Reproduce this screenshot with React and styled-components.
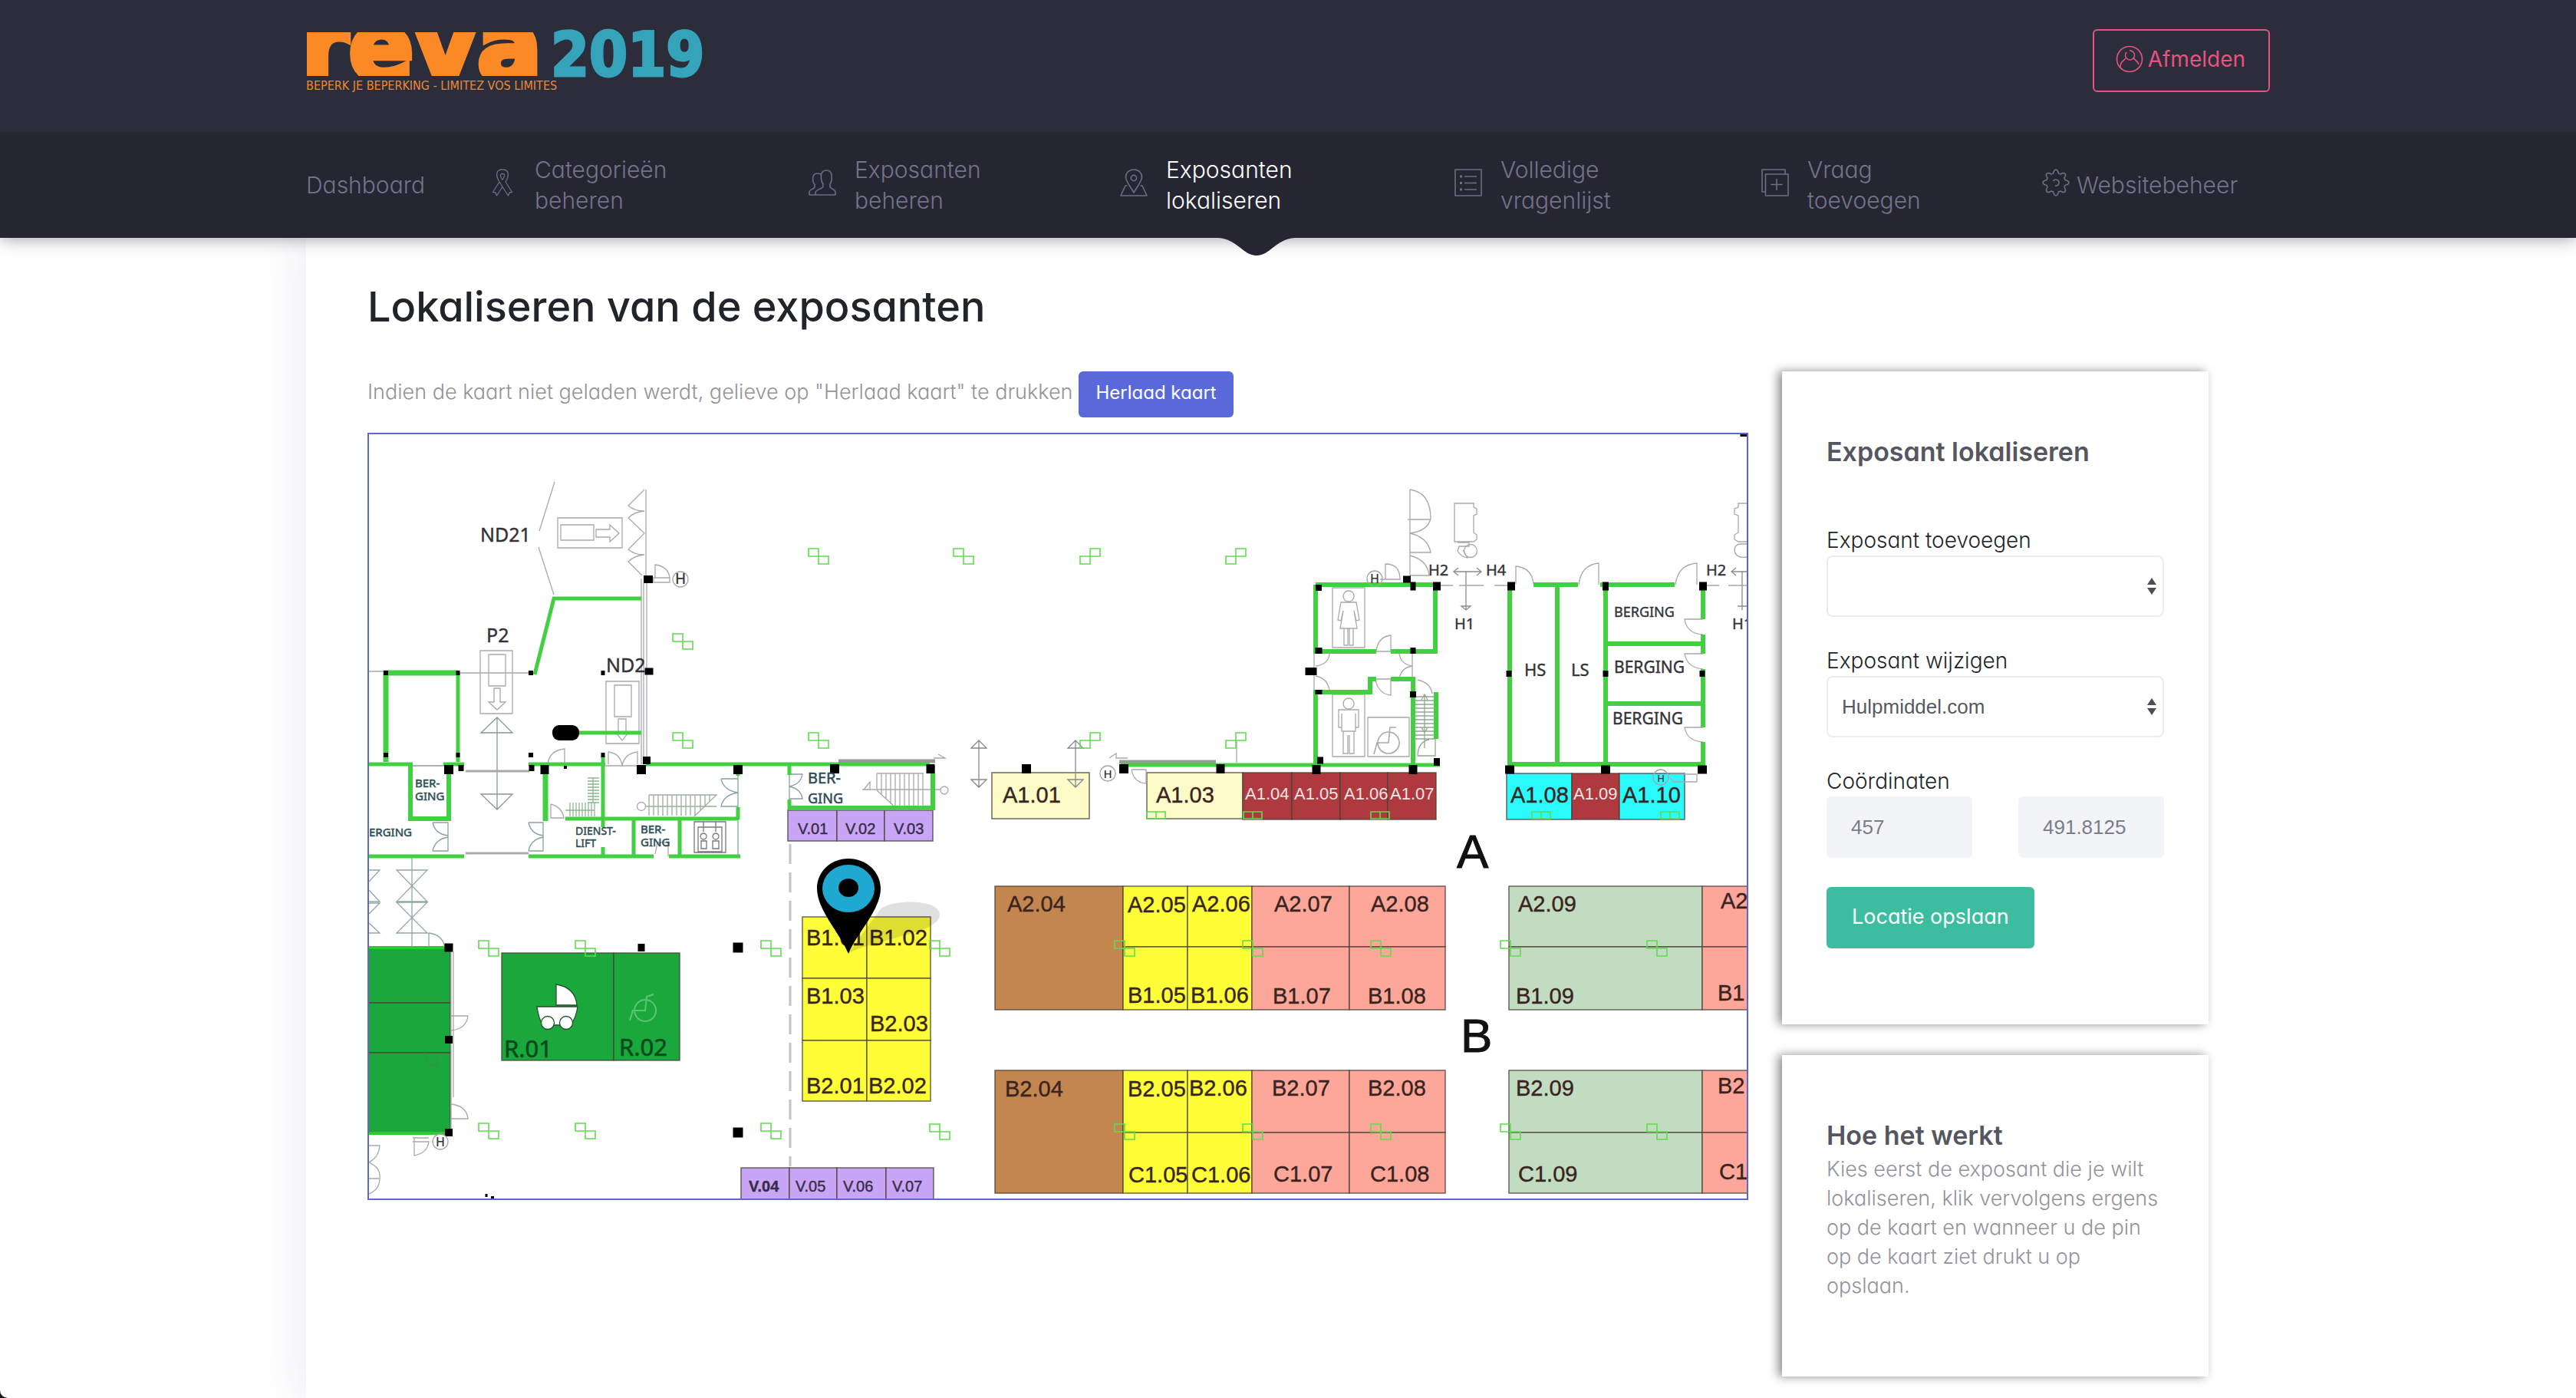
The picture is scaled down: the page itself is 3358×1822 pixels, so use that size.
import React from 'react';
import styled, { createGlobalStyle, css } from 'styled-components';

const GlobalStyle = createGlobalStyle`
  *, *::before, *::after { box-sizing: border-box; }
  html { background: #17171c; }
  body {
    margin: 0;
    color: #212529;
    font-family: Inter, Roboto, sans-serif;
    font-feature-settings: 'cv11' 1;
    font-size: 27px;
  }
  h1, h2, p { margin: 0; }
`;

const Page = styled.div`
  min-height: 100vh;
  display: flex;
  flex-direction: column;
  background: #fff;
  border-bottom-left-radius: 10px;
  overflow: hidden;
`;

const Container = styled.div`
  width: 100%;
  max-width: 2560px;
  margin: 0 auto;
`;

/* ---------- header ---------- */

const TopBar = styled.header`
  background: #2c2d3a;
  position: relative;
  z-index: 3;
`;

const TopBarInner = styled(Container)`
  display: flex;
  justify-content: space-between;
  align-items: flex-start;
  padding: 38px 0 52px;
`;

const LogoLink = styled.a`
  display: block;
  text-decoration: none;
  svg { display: block; overflow: visible; }
`;

const LogoutButton = styled.button`
  display: flex;
  align-items: center;
  gap: 6px;
  height: 82px;
  padding: 0 30px 4px 28px;
  border: 2px solid #e6537f;
  border-radius: 6px;
  background: transparent;
  color: #e6537f;
  font: inherit;
  font-size: 28px;
  cursor: pointer;
`;

const NavBar = styled.nav`
  background: #262632;
  position: relative;
  z-index: 2;
  box-shadow: 0 2px 20px rgba(30, 28, 50, 0.4);
`;

const NavList = styled.ul`
  display: grid;
  grid-template-columns: 238fr 417fr 406fr 436fr 400fr 366fr 297fr;
  list-style: none;
  width: 100%;
  max-width: 2560px;
  margin: 0 auto;
  padding: 0;
`;

const NavItem = styled.li`
  position: relative;
  display: flex;
`;

const NavLink = styled.a`
  display: flex;
  align-items: center;
  gap: ${(p) => (p.$tight ? 9 : 24)}px;
  height: 138px;
  color: ${(p) => (p.$active ? '#fff' : '#73738a')};
  font-size: 30px;
  font-weight: 300;
  line-height: 40px;
  text-decoration: none;
  svg { flex: none; color: #6d6d83; margin-bottom: 6px; }
`;

const NavText = styled.span`
  display: flex;
  flex-direction: column;
`;

const NavArrow = styled.svg`
  position: absolute;
  top: 100%;
  left: 128px;
  margin-top: -1px;
`;

/* ---------- content ---------- */

const Main = styled.main`
  flex: 1;
  margin-left: max(0px, calc(50% - 1280px));
  background: #fff;
  box-shadow: -10px 0 50px rgba(70, 60, 130, 0.09);
`;

const Content = styled.div`
  max-width: 2560px;
  padding: 60px 80px 28px;
`;

const PageTitle = styled.h1`
  font-size: 54px;
  line-height: 60px;
  font-weight: 500;
`;

const Columns = styled.div`
  display: grid;
  grid-template-columns: minmax(0, 1fr) 556px;
  gap: 44px;
  align-items: start;
  padding-top: 54px;
`;

const Sidebar = styled.aside`
  display: flex;
  flex-direction: column;
  gap: 40px;
`;

const MapColumn = styled.section`
  display: flex;
  flex-direction: column;
  gap: 20px;
`;

const Hint = styled.div`
  display: flex;
  align-items: center;
  gap: 8px;
`;

const mutedText = css`
  color: #93939b;
  font-size: 27px;
  font-weight: 300;
  line-height: 38px;
`;

const HintText = styled.p`
  ${mutedText}
  padding-bottom: 6px;
`;

const SolidButton = styled.button`
  border: 0;
  border-radius: 6px;
  color: #fff;
  background: ${(p) => p.$color};
  font: inherit;
  font-size: ${(p) => (p.$small ? 24 : 27)}px;
  height: ${(p) => (p.$small ? 60 : 80)}px;
  padding: ${(p) => (p.$small ? '0 22px 6px' : '0 33px 4px')};
  white-space: nowrap;
  cursor: pointer;
`;

const MapFrame = styled.div`
  border: 2px solid #5e67cf;
  svg { display: block; width: 100%; height: auto; }
`;

const Card = styled.section`
  background: #fff;
  padding: 80px 58px 99px;
  box-shadow: -5px 0 12px rgba(0, 0, 0, 0.45);
`;

const CardTitle = styled.h2`
  color: #55565f;
  font-size: 34px;
  line-height: 50px;
  font-weight: 600;
`;

const CardText = styled.p`
  ${mutedText}
`;

const Form = styled.form`
  display: flex;
  flex-direction: column;
  align-items: flex-start;
  gap: 38px;
  padding-top: 71px;
`;

const Field = styled.div`
  width: 100%;
`;

const Label = styled.label`
  display: block;
  font-size: 28px;
  font-weight: 300;
  line-height: 39px;
`;

const SelectBox = styled.div`
  position: relative;
  svg {
    position: absolute;
    right: 10px;
    top: 28px;
    pointer-events: none;
  }
`;

const Select = styled.select`
  display: block;
  appearance: none;
  width: 100%;
  height: 80px;
  padding: 0 40px 0 18px;
  border: 2px solid #ebecef;
  border-radius: 8px;
  background: #fff;
  color: #575962;
  font-family: 'Liberation Sans', Arial, sans-serif;
  font-size: 26px;
`;

const InputRow = styled.div`
  display: grid;
  grid-template-columns: 1fr 1fr;
  gap: 60px;
`;

const Input = styled.input`
  width: 100%;
  height: 80px;
  padding: 0 32px;
  border: 0;
  border-radius: 6px;
  background: #f3f4f8;
  color: #7b7c87;
  font-family: 'Liberation Sans', Arial, sans-serif;
  font-size: 26px;
`;

/* ---------- icons ---------- */

const Icon = ({ children, size = 36 }) => (
  <svg width={size} height={size} viewBox="0 0 36 36" fill="none" stroke="currentColor" strokeWidth="1.6" strokeLinejoin="round" aria-hidden="true">
    {children}
  </svg>
);

const RibbonIcon = () => (
  <Icon>
    <path d="M18 1 C9 1 9 9 14 17 L5.500 30.500 L9 31 L10.500 35 L18 23.500 L25.500 35 L27 31 L30.500 30.500 L22 17 C27 9 27 1 18 1 Z" strokeWidth="1.300" />
    <path d="M18 6.500 C14 6.500 15 10 18 14.500 C21 10 22 6.500 18 6.500 Z M14 17 L18 23.500" strokeWidth="1.300" />
  </Icon>
);
const UsersIcon = () => (
  <Icon>
    <path d="M9 34 H35 V30 C35 27 28 26 28 23 V20 C30 17 30.500 12 30 8 C29.500 4 27 2 23.500 2 C20 2 17 4 16.500 8 C16 12 17 17 19 20 V23 C19 26 9 27 9 31 Z" />
    <path d="M9 34 H1 V30 C1 27 8 26 8 24 V21 C6 18 5 14 6 10 C7 6 11 5 16.500 7" />
  </Icon>
);
const PinIcon = () => (
  <Icon>
    <path d="M18 31 C14 24 7.500 16 7.500 11 C7.500 5 12 1 18 1 C24 1 28.500 5 28.500 11 C28.500 16 22 24 18 31 Z" />
    <circle cx="18" cy="12" r="3.600" />
    <path d="M9.500 22 H7 L1 35 H35 L29 22 H26.500" />
  </Icon>
);
const ListIcon = () => (
  <Icon>
    <path d="M1 1 H35 V35 H1 Z M13 10 H29 M13 18.500 H29 M13 27 H29" />
    <path d="M7 10 H10 M7 18.500 H10 M7 27 H10" strokeWidth="3" />
  </Icon>
);
const AddIcon = () => (
  <Icon>
    <path d="M5.500 7 H35 V35 H5.500 Z M5.500 30 H1 V1 H31 V7 M20 13 V28 M12.500 20.500 H27.500" />
  </Icon>
);
const GearIcon = () => (
  <Icon>
    <path d="M15.500 3 Q18 -1 20.500 3 L21.500 6 L24 7 L27 5.500 Q31 5 30.500 9 L29 12 L30 14.500 L33 15.500 Q37 18 33 20.500 L30 21.500 L29 24 L30.500 27 Q31 31 27 30.500 L24 29 L21.500 30 L20.500 33 Q18 37 15.500 33 L14.500 30 L12 29 L9 30.500 Q5 31 5.500 27 L7 24 L6 21.500 L3 20.500 Q-1 18 3 15.500 L6 14.500 L7 12 L5.500 9 Q5 5 9 5.500 L12 7 L14.500 6 Z" />
    <path d="M14.500 16 A4 4 0 1 1 17 22" />
  </Icon>
);
const AccountIcon = () => (
  <Icon>
    <circle cx="18" cy="18" r="16.500" />
    <path d="M14 9 A6 6 0 1 0 18 7" />
    <path d="M6 29 C6 22 9 21 13 17 M23 17 C27 20 29 22 30 25" />
  </Icon>
);
const SortArrows = () => (
  <svg width="12" height="24" viewBox="0 0 12 24" fill="#4c4d56" aria-hidden="true">
    <path d="M0 10 L6 1 L12 10 Z M0 14 L6 23 L12 14 Z" />
  </svg>
);

const Logo = () => (
  <svg width="520" height="82" viewBox="0 0 520 82" role="img" aria-label="reva 2019">
    <clipPath id="logo-band"><path d="M1 4 H318 L322 61 H1 Z" /></clipPath>
    <g fontFamily="'DejaVu Sans', sans-serif" fontWeight="700">
      <text x="-7" y="66" fontSize="126" fill="#fb8a26" stroke="#fb8a26" strokeWidth="7" clipPath="url(#logo-band)">reva</text>
      <text x="319" y="61" fontSize="80" fill="#35a4ba" stroke="#35a4ba" strokeWidth="3" fontFamily="'DejaVu Sans Condensed', 'DejaVu Sans', sans-serif">2019</text>
    </g>
    <text x="0" y="79" fontSize="16" fill="#e8893a" fontFamily="'Liberation Sans Narrow', 'DejaVu Sans Condensed', sans-serif">BEPERK JE BEPERKING - LIMITEZ VOS LIMITES</text>
  </svg>
);

/* ---------- floor plan ---------- */

const STAND = { brown: '#c3864f', yellow: '#fdfd38', salmon: '#fca799', mint: '#c1dcc1', cream: '#fdfcc9', red: '#ae393f', cyan: '#2bfafc', violet: '#c8a6f5', green: '#1aa83c' };

// [x, y, width, height, colour]
const stands = [
  [1298, 1155, 167, 161, 'brown'], [1465, 1155, 84, 79, 'yellow'], [1549, 1155, 84, 79, 'yellow'], [1465, 1234, 84, 82, 'yellow'], [1549, 1234, 84, 82, 'yellow'],
  [1633, 1155, 127, 79, 'salmon'], [1760, 1155, 125, 79, 'salmon'], [1633, 1234, 127, 82, 'salmon'], [1760, 1234, 125, 82, 'salmon'],
  [1298, 1395, 167, 160, 'brown'], [1465, 1395, 84, 81, 'yellow'], [1549, 1395, 84, 81, 'yellow'], [1465, 1476, 84, 79, 'yellow'], [1549, 1476, 84, 79, 'yellow'],
  [1633, 1395, 127, 81, 'salmon'], [1760, 1395, 125, 81, 'salmon'], [1633, 1476, 127, 79, 'salmon'], [1760, 1476, 125, 79, 'salmon'],
  [1968, 1155, 252, 79, 'mint'], [1968, 1234, 252, 82, 'mint'], [2220, 1155, 90, 79, 'salmon'], [2220, 1234, 90, 82, 'salmon'],
  [1968, 1395, 252, 81, 'mint'], [1968, 1476, 252, 79, 'mint'], [2220, 1395, 90, 81, 'salmon'], [2220, 1476, 90, 79, 'salmon'],
  [1294, 1007, 127, 60, 'cream'], [1496, 1007, 125, 60, 'cream'],
  [1621, 1007, 64, 61, 'red'], [1685, 1007, 63, 61, 'red'], [1748, 1007, 62, 61, 'red'], [1810, 1007, 63, 61, 'red'],
  [1965, 1008, 85, 60, 'cyan'], [2050, 1008, 62, 60, 'red'], [2112, 1008, 85, 60, 'cyan'],
  [1028, 1056, 64, 40, 'violet'], [1092, 1056, 62, 40, 'violet'], [1154, 1056, 63, 40, 'violet'],
  [967, 1522, 63, 50, 'violet'], [1030, 1522, 62, 50, 'violet'], [1092, 1522, 64, 50, 'violet'], [1156, 1522, 62, 50, 'violet'],
  [1047, 1195, 84, 80, 'yellow'], [1131, 1195, 83, 80, 'yellow'], [1047, 1275, 84, 81, 'yellow'], [1131, 1275, 83, 81, 'yellow'], [1047, 1356, 84, 79, 'yellow'], [1131, 1356, 83, 79, 'yellow'],
  [655, 1242, 146, 140, 'green'], [801, 1242, 86, 140, 'green'],
  [470, 1235, 118, 72, 'green'], [470, 1307, 118, 65, 'green'], [470, 1372, 118, 104, 'green'],
];

// [text, x, baseline]
const standLabels = [
  ['A2.04', 1314, 1188], ['A2.05', 1471, 1189], ['A2.06', 1555, 1188], ['A2.07', 1662, 1188], ['A2.08', 1788, 1188],
  ['B1.05', 1471, 1307], ['B1.06', 1553, 1307], ['B1.07', 1660, 1308], ['B1.08', 1784, 1308],
  ['B2.04', 1311, 1429], ['B2.05', 1471, 1429], ['B2.06', 1551, 1428], ['B2.07', 1659, 1428], ['B2.08', 1784, 1428],
  ['C1.05', 1472, 1541], ['C1.06', 1554, 1541], ['C1.07', 1661, 1540], ['C1.08', 1787, 1540],
  ['A2.09', 1980, 1188], ['B1.09', 1977, 1308], ['B2.09', 1977, 1428], ['C1.09', 1980, 1540],
  ['A2', 2244, 1184], ['B1', 2240, 1304], ['B2', 2240, 1425], ['C1', 2242, 1537],
  ['A1.01', 1308, 1046], ['A1.03', 1508, 1046], ['A1.08', 1970, 1046], ['A1.10', 2116, 1046],
  ['B1.01', 1052, 1232], ['B1.02', 1134, 1232], ['B1.03', 1052, 1308], ['B2.03', 1135, 1344], ['B2.01', 1052, 1425], ['B2.02', 1133, 1425],
];
const redLabels = [['A1.04', 1624], ['A1.05', 1688], ['A1.06', 1753], ['A1.07', 1813], ['A1.09', 2052]];
const violetLabels = [['V.01', 1041, 1087], ['V.02', 1103, 1087], ['V.03', 1166, 1087], ['V.05', 1038, 1553], ['V.06', 1100, 1553], ['V.07', 1164, 1553]];

// [text, x, baseline, size]
const roomLabels = [
  ['ND21', 627, 706, 25], ['P2', 635, 837, 25], ['ND2', 791, 876, 25], ['H2', 1863, 750, 20], ['H4', 1938, 750, 20], ['H1', 1897, 820, 20],
  ['H2', 2225, 750, 20], ['H1', 2259, 820, 20], ['HS', 1988, 881, 22], ['LS', 2049, 881, 22],
  ['BERGING', 2105, 804, 18], ['BERGING', 2105, 877, 21], ['BERGING', 2103, 944, 21],
];
const smallRoomLabels = [
  ['BER-', 542, 1026, 15], ['GING', 542, 1043, 15], ['ERGING', 482, 1090, 15], ['DIENST-', 751, 1088, 14], ['LIFT', 751, 1104, 14],
  ['BER-', 836, 1086, 15], ['GING', 836, 1103, 15], ['BER-', 1054, 1021, 20], ['GING', 1054, 1047, 18],
];

// [centre x, centre y, width, height]
const pillars = [
  [846, 755, 12, 10], [847, 875, 11, 9], [844, 991, 10, 10], [586, 1003, 12, 12], [602, 1001, 7, 8], [694, 1001, 7, 8], [711, 1003, 11, 12], [837, 1003, 12, 12],
  [963, 1003, 12, 12], [738, 1000, 4, 4], [504, 877, 6, 6], [598, 877, 5, 6], [693, 877, 6, 6], [787, 877, 5, 6], [504, 984, 6, 6], [598, 984, 5, 6], [693, 984, 6, 6], [787, 984, 5, 6],
  [586, 1235, 11, 11], [586, 1355, 10, 10], [586, 1476, 10, 10], [837, 1235, 9, 10], [963, 1235, 13, 13], [963, 1476, 13, 13],
  [1089, 1002, 12, 12], [1214, 1002, 11, 12], [1339, 1002, 12, 12], [1466, 1002, 12, 12], [1592, 1002, 11, 12], [1717, 1003, 11, 12], [1843, 1003, 11, 12],
  [1720, 766, 8, 8], [1843, 764, 7, 11], [1874, 764, 10, 11], [1835, 755, 10, 9], [1720, 848, 9, 8], [1843, 848, 7, 8], [1710, 875, 15, 10], [1720, 902, 9, 6], [1843, 905, 8, 8],
  [1722, 991, 8, 9], [1874, 993, 8, 10], [1971, 764, 10, 11], [2094, 764, 8, 11], [2221, 764, 10, 11], [1968, 878, 7, 8], [2094, 878, 7, 8], [2220, 878, 7, 8],
  [1969, 1003, 12, 11], [2094, 1003, 12, 11], [2220, 1003, 12, 11], [2274, 567, 9, 4], [635, 1558, 3, 4], [643, 1561, 4, 4],
];

const lamps = [
  [625, 1226], [751, 1226], [993, 1226], [625, 1464], [751, 1464], [993, 1464], [1213, 1226], [1213, 1465], [1055, 955], [878, 826], [878, 955], [1055, 715], [1244, 715],
  [1454, 1226], [1621, 1226], [1788, 1226], [1454, 1465], [1621, 1465], [1788, 1465], [1957, 1226], [2148, 1226], [1957, 1465], [2148, 1465],
];
const mirroredLamps = [[1409, 715], [1599, 715], [1409, 955], [1599, 955]];
const flatLamps = [1496, 1622, 1788, 1998, 2166];

const range = (from, to, step) => Array.from({ length: Math.floor((to - from) / step) + 1 }, (_, i) => from + i * step);

const Walls = () => (
  <g fill="none" stroke="#42cf42">
    <path strokeWidth="5" d="M698 879 L723 780 H837 M756 955 H837 M482 996 H539 M579 996 H606 M690 996 H790 M843 996 H1213 M738 1067 H964 M482 1116 H606 M690 1116 H853 M873 1116 H966 M827 1067 V1117 M887 1067 V1117 M787 985 V1078 M787 1104 V1116 M963 1004 V1011 M963 1052 V1068" />
    <path strokeWidth="7" d="M504 993 V877 H598 M712 1003 V1070" />
    <path strokeWidth="5" d="M598 877 V993 M1030 996 V1010 M1030 1042 V1055" />
    <path strokeWidth="6" d="M536 996 V1067 H586 V1003 M1030 1053 H1217 V998" />
    <path strokeWidth="5" d="M1462 997 H1878" />
    <path strokeWidth="6" d="M1716 762 H1872 V849 H1814 M1795 849 H1716 V762 M1716 997 V902 H1787 V885 H1795 M1814 885 H1843 V997 M1873 902 V963" />
    <path strokeWidth="6" d="M1969 764 V996 H2221 V967 M2000 762 H2058 M2087 762 H2184 M2031 762 V996 M2094 762 V996 M2094 839 H2220 M2094 917 H2220 M2221 764 V807 M2221 827 V852 M2221 872 V948" />
    <path strokeWidth="4" stroke="#2ccc2c" d="M482 1235 H580 M482 1477 H588" />
  </g>
);

const LightLines = () => (
  <g fill="none" stroke="#a9a9ae" strokeWidth="1.3">
    <path d="M724 628 L704 692 M703 713 L723 775 M728 675 H812 V714 H728 Z M732 684 H775 V704 H732 Z M778 690 H796 V684 L808 695 L796 706 V700 H778 Z" />
    <path d="M843 638 V754 M841 638 L820 659 Q828 666 841 666 Q828 667 820 675 L841 695 L820 716 Q828 723 841 723 Q828 724 820 732 L838 750 M855 753 V736 Q872 738 874 753 M853 753 H874 V759 H853 Z" />
    <path d="M837 754 V996 M844 760 V990 M840 760 V990 M482 875 H504" />
    <path d="M627 848 H669 V930 H627 Z M638 853 H660 V894 H638 Z M645 897 V915 H638 L649 925 L660 915 H653 V897 Z M598 877 H693" />
    <path stroke="#86989c" d="M649 935 V1055 M649 935 L628 955 H669 Z M628 1035 H669 L649 1055 Z" />
    <path d="M791 888 H834 V969 H791 Z M802 893 H824 V934 H802 Z M807 937 V955 H804 L812 965 L820 955 H817 V937 Z M715 996 Q717 978 737 976 V996 M794 980 V996 M794 980 Q810 982 812 998 Q815 982 832 980 V996 M790 998 H844" />
    <path stroke="#8ba0a4" d="M539 998 H579 M565 1072 H585 V1109 H565 M565 1072 Q568 1087 585 1089 M565 1109 Q568 1094 585 1091 M690 1072 H709 V1109 H690 M690 1072 Q693 1087 709 1089 M690 1109 Q693 1094 709 1091 M963 1011 V1052 M941 1015 H963 M941 1015 Q944 1030 963 1033 Q944 1036 941 1051 H963 M963 1070 V1115 M1030 1010 V1042 M1030 1009 H1047 Q1045 1022 1030 1025 Q1045 1028 1047 1041 H1030" />
    <path stroke="#8fb58f" d={range(744, 776, 4).map((x) => `M${x} 1046 V1064`).join(' ') + range(1014, 1048, 4).map((y) => ` M767 ${y} H782`).join('') + ' M738 1056 H776 M774 1014 V1046'} />
    <path stroke="#9cae9c" d={range(847, 910, 6).map((x) => `M${x} 1036 V1063`).join(' ') + ' M847 1036 H935 L906 1064 M842 1051 H935 M914 1036 V1056 M920 1036 V1050 M926 1036 V1044'} />
    <circle cx="837" cy="1051" r="5.500" />
    <path d="M719 1048 V1066 H736 Q734 1052 719 1048 M855 1113 L858 1098 H872 V1116" />
    <path stroke="#77777c" d="M906 1071 H947 V1111 H906 Z M911 1078 H942 V1110 H911 Z M918 1086 a4 4 0 1 0 .1 0 M934 1086 a4 4 0 1 0 .1 0 M915 1096 H922 V1106 H915 Z M930 1096 H938 V1106 H930 Z M918 1071 V1084 M934 1071 V1084" />
    <path stroke="#8fa8a8" d="M538 1118 V1235 M518 1134 H558 L518 1175 H558 Z M518 1176 H558 L518 1216 H558 Z M482 1134 H496 L482 1149 M482 1160 L496 1175 H482 M482 1177 H496 L482 1191 M482 1203 L496 1216 H482 M560 1235 V1216 Q578 1218 581 1235" />
    <path d="M589 1240 V1475 M592 1240 V1430 M589 1324 H611 Q609 1341 589 1343 M589 1439 Q609 1441 611 1458 H589 M539 1483 H560 M541 1483 V1506 Q558 1503 560 1488 H539 M482 1493 H496 Q495 1508 482 1515 Q498 1522 496 1536 Q496 1550 482 1556 M482 1536 H496" />
    <path stroke="#3c8c4c" d="M555 1372 Q556 1388 571 1390 V1374" />
    <path stroke="#aaa" strokeWidth="3" d="M608 1005 H691 M608 1112 H690" />
    <path stroke="#999" strokeWidth="5" d="M1094 992 H1220 M1460 993 H1586" />
    <path stroke="#c2c2ca" strokeWidth="3" strokeDasharray="26 11" d="M1031 1100 V1520" />
    <path d={range(1144, 1206, 6).map((x) => `M${x} 1008 V${Math.min(1052, 1030 + (x - 1144))}`).join(' ') + ' M1144 1008 H1205 M1144 1030 L1168 1052 M1125 1029 H1227 M1127 1029 L1135 1019 V1030 M1218 988 H1233 L1224 983'} />
    <circle cx="1232" cy="1030" r="5" />
    <path stroke="#88888c" d="M1277 965 V1026 M1267 975 H1287 L1277 965 Z M1267 1016 H1287 L1277 1026 Z M1403 965 V1026 M1393 975 H1413 L1403 965 Z M1393 1016 H1413 L1403 1026 Z" />
    <path d="M1447 988 L1456 982 V988 H1471 M1476 1003 H1495 V1021 Q1479 1020 1476 1003 M1613 965 V994" />
    <path d="M1839 638 V752 M1836 677 H1866 M1839 638 Q1866 642 1866 676 Q1862 692 1839 695 Q1862 700 1866 720 H1839 M1839 724 Q1862 730 1864 750 H1839 M1807 755 V735 Q1826 735 1826 755 H1800" />
    <path d="M1897 656 H1922 V661 L1926 663 V670 L1922 672 V694 L1926 697 V703 L1922 706 H1897 Z M1901 707 H1916 V712 H1903 L1901 718 Q1906 726 1914 727 L1908 717" />
    <circle cx="1918" cy="718" r="8.500" />
    <path d="M2278 656 H2267 V661 L2262 663 V670 L2267 672 V694 L2262 697 V703 L2267 706 H2278 M2262 718 q0 -9 8 -9 h8 M2262 718 q2 10 16 8" />
    <path stroke="#8c8c90" d="M1896 745 H1932 M1902 740 L1896 745 L1902 750 M1926 740 L1932 745 L1926 750 M1912 745 V795 M1906 790 H1918 L1912 795 Z M2264 740 L2258 745 L2264 750 M2258 745 H2278 M2272 745 V795 M2266 790 H2278" />
    <path d="M1878 763 H1895 M1903 763 H1935 M1949 763 H1966 M2226 763 H2242 M2254 763 H2278" />
    <path d="M1738 766 H1780 V844 H1738 Z M1738 905 H1780 V986 H1738 Z M1784 935 H1838 V986 H1784 Z" />
    <path d="M1759 770 a7 7 0 1 0 .1 0 M1749 785 H1769 L1773 808 L1769 809 L1766 796 L1770 819 H1748 L1752 796 L1749 809 L1745 808 Z M1753 819 V841 H1758 V819 M1760 819 V841 H1765 V819" />
    <path d="M1759 910 a7 7 0 1 0 .1 0 M1746 925 H1772 V948 H1768 V953 H1750 V948 H1746 Z M1750 930 V948 M1768 930 V948 M1752 953 V982 H1758 V958 M1760 958 V982 H1766 V953" />
    <path strokeWidth="1.600" d="M1811 954 a14 14 0 1 0 .1 0 M1792 983 L1796 968 H1811 L1813 948 H1821" />
    <path stroke="#93a893" d={range(908, 963, 5).map((y) => `M1846 ${y} H1872`).join(' ') + ' M1858 905 V975 M1854 912 L1858 905 L1862 912 M1854 948 L1858 955 L1862 948 M1849 985 Q1850 966 1864 964 M1849 985 H1872 V963'} />
    <path d="M1714 850 V902 M1734 852 Q1733 866 1716 868 M1716 881 Q1732 884 1734 900 M1795 849 H1814 V828 Q1797 830 1795 849 M1842 850 V884 M1825 852 Q1827 866 1842 868 Q1828 870 1825 884 M1794 885 H1814 V906 Q1797 904 1794 885 M1849 886 Q1866 890 1868 904" />
    <path d="M1977 761 V738 Q1998 740 2000 761 M2085 762 V734 Q2062 736 2059 762 M2213 762 V734 Q2188 736 2185 762 M2221 807 H2197 Q2200 826 2221 827 M2221 852 H2197 Q2200 870 2221 872 M2221 948 H2197 Q2200 966 2221 967" />
    <path d="M2178 1009 H2213 V1019 H2182 L2178 1013" />
  </g>
);

const FloorPlan = () => (
  <svg viewBox="482 566 1796 996" role="img" aria-label="Plattegrond">
    <rect x="482" y="566" width="1796" height="996" fill="#fff" />
    <g stroke="#4a4038" strokeOpacity="0.75" strokeWidth="1.600">
      {stands.map(([x, y, w, h, c], i) => <rect key={i} x={x} y={y} width={w} height={h} fill={STAND[c]} />)}
    </g>
    <LightLines />
    <Walls />
    {pillars.map(([x, y, w, h], i) => <rect key={i} x={x - w / 2} y={y - h / 2} width={w} height={h} fill="#000" />)}
    <rect x="721" y="945" width="35" height="20" rx="9" />
    <g fill="none" stroke="#5fdc4e" strokeWidth="1.600">
      {lamps.map(([x, y], i) => <path key={i} d={`M${x} ${y} h13 v10 h-13 Z M${x + 13} ${y + 10} h13 v10 h-13 Z`} />)}
      {mirroredLamps.map(([x, y], i) => <path key={i} d={`M${x + 13} ${y} h13 v10 h-13 Z M${x} ${y + 10} h13 v10 h-13 Z`} />)}
      {flatLamps.map((x) => <path key={x} d={`M${x} 1058 h12 v9 h-12 Z M${x + 12} 1058 h12 v9 h-12 Z`} />)}
    </g>

    <g stroke="#24502c" strokeWidth="1.300" fill="#fff">
      <path d="M726 1283 V1310 H753 Q751 1287 726 1283 Z M701 1312 H754 Q752 1326 745 1336 H709 Q703 1328 701 1312 Z" />
      <circle cx="715" cy="1333" r="8.500" />
      <circle cx="739" cy="1333" r="8.500" />
    </g>
    <path d="M842 1303 a14 14 0 1 0 .1 0 M822 1330 L826 1317 H842 L844 1299 L853 1296" fill="none" stroke="#5cc474" strokeWidth="2" />

    <g fontFamily="'Liberation Sans', Arial, sans-serif">
      <g fontSize="29" fill="#3a2420" stroke="#3a2420" strokeWidth="0.400">
        {standLabels.map(([t, x, y]) => <text key={t + x} x={x} y={y}>{t}</text>)}
      </g>
      <g fontSize="22" fill="#f8e4e4">
        {redLabels.map(([t, x]) => <text key={t} x={x} y="1042">{t}</text>)}
      </g>
      <g fontSize="20" fill="#382c48" stroke="#382c48" strokeWidth="0.400">
        {violetLabels.map(([t, x, y]) => <text key={t} x={x} y={y}>{t}</text>)}
        <text x="977" y="1553" fontWeight="700">V.04</text>
      </g>
      <g fontSize="62" fill="#111" stroke="#111" strokeWidth="1">
        <text x="1900" y="1131">A</text>
        <text x="1905" y="1371">B</text>
      </g>
    </g>

    <g fontFamily="'Noto Sans', 'Open Sans', sans-serif">
      <g fill="#333338" stroke="#333338" strokeWidth="0.400">
        {roomLabels.map(([t, x, y, s]) => <text key={t + x + y} x={x} y={y} fontSize={s}>{t}</text>)}
      </g>
      <g fill="#2c4c54" stroke="#2c4c54" strokeWidth="0.500">
        {smallRoomLabels.map(([t, x, y, s]) => <text key={t + x + y} x={x} y={y} fontSize={s}>{t}</text>)}
      </g>
      <g fontSize="31" fill="#0c4a1e" stroke="#0c4a1e" strokeWidth="0.600">
        <text x="658" y="1378">R.01</text>
        <text x="808" y="1376">R.02</text>
      </g>
      {[[888, 755, 19], [575, 1488, 16], [1445, 1008, 15], [1793, 754, 16], [2166, 1013, 13]].map(([x, y, s]) => (
        <g key={x}>
          <circle cx={x} cy={y} r="10" fill="none" stroke="#a4a4aa" strokeWidth="1.300" />
          <text x={x} y={y + 6} fontSize={s} textAnchor="middle" fill="#333338" fontWeight="500">H</text>
        </g>
      ))}
    </g>

    <path d="M1107 1242 L1148 1186 C1158 1172 1226 1170 1226 1192 C1226 1216 1150 1222 1107 1242 Z" fill="#000" fillOpacity="0.12" />
    <path d="M1107 1243 C1096 1216 1066 1186 1066 1158 C1066 1136 1084 1119 1107 1119 C1130 1119 1149 1136 1149 1158 C1149 1186 1118 1216 1107 1243 Z" fill="#000" />
    <ellipse cx="1107" cy="1158" rx="34" ry="31" fill="#1fa9d1" />
    <ellipse cx="1107" cy="1157" rx="13" ry="12" fill="#000" />
  </svg>
);

/* ---------- page ---------- */

const navigation = [
  { lines: ['Dashboard'] },
  { lines: ['Categorieën', 'beheren'], icon: RibbonIcon },
  { lines: ['Exposanten', 'beheren'], icon: UsersIcon },
  { lines: ['Exposanten', 'lokaliseren'], icon: PinIcon, active: true },
  { lines: ['Volledige', 'vragenlijst'], icon: ListIcon },
  { lines: ['Vraag', 'toevoegen'], icon: AddIcon },
  { lines: ['Websitebeheer'], icon: GearIcon, tight: true },
];

export default function App() {
  return (
    <>
      <GlobalStyle />
      <Page>
        <TopBar>
          <TopBarInner>
            <LogoLink href="#"><Logo /></LogoLink>
            <LogoutButton type="button"><AccountIcon />Afmelden</LogoutButton>
          </TopBarInner>
        </TopBar>
        <NavBar>
          <NavList>
            {navigation.map(({ lines, icon: ItemIcon, active, tight }) => (
              <NavItem key={lines.join()}>
                <NavLink href="#" $active={active} $tight={tight}>
                  {ItemIcon && <ItemIcon />}
                  <NavText>{lines.map((line) => <span key={line}>{line}</span>)}</NavText>
                </NavLink>
                {active && (
                  <NavArrow width="100" height="25" viewBox="0 0 100 25" aria-hidden="true">
                    <path d="M0 0 H100 V1 C74 3 68 24 50 24 C32 24 26 3 0 1 Z" fill="#262632" />
                  </NavArrow>
                )}
              </NavItem>
            ))}
          </NavList>
        </NavBar>
        <Main>
          <Content>
            <PageTitle>Lokaliseren van de exposanten</PageTitle>
            <Columns>
              <MapColumn>
                <Hint>
                  <HintText>Indien de kaart niet geladen werdt, gelieve op "Herlaad kaart" te drukken</HintText>
                  <SolidButton type="button" $small $color="#5a69da">Herlaad kaart</SolidButton>
                </Hint>
                <MapFrame><FloorPlan /></MapFrame>
              </MapColumn>
              <Sidebar>
                <Card>
                  <CardTitle>Exposant lokaliseren</CardTitle>
                  <Form>
                    <Field>
                      <Label htmlFor="add">Exposant toevoegen</Label>
                      <SelectBox>
                        <Select id="add" defaultValue=""><option value="" /></Select>
                        <SortArrows />
                      </SelectBox>
                    </Field>
                    <Field>
                      <Label htmlFor="edit">Exposant wijzigen</Label>
                      <SelectBox>
                        <Select id="edit"><option>Hulpmiddel.com</option></Select>
                        <SortArrows />
                      </SelectBox>
                    </Field>
                    <Field>
                      <Label htmlFor="coord-x">Coördinaten</Label>
                      <InputRow>
                        <Input id="coord-x" readOnly value="457" />
                        <Input aria-label="Coördinaat y" readOnly value="491.8125" />
                      </InputRow>
                    </Field>
                    <SolidButton type="button" $color="#3dbda0">Locatie opslaan</SolidButton>
                  </Form>
                </Card>
                <Card>
                  <CardTitle>Hoe het werkt</CardTitle>
                  <CardText>
                    Kies eerst de exposant die je wilt lokaliseren, klik vervolgens ergens op de kaart en wanneer u de pin op de kaart ziet drukt u op opslaan.
                  </CardText>
                </Card>
              </Sidebar>
            </Columns>
          </Content>
        </Main>
      </Page>
    </>
  );
}
